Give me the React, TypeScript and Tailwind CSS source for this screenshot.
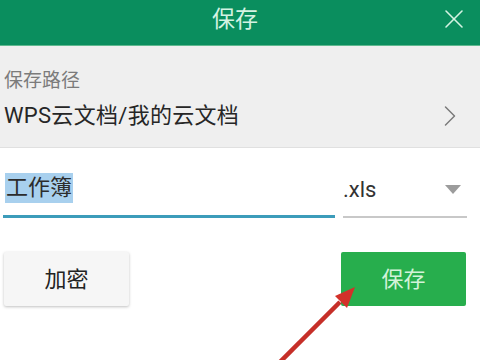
import { ChevronRight, X } from "lucide-react"

export default function App() {
    return (
        <div className="relative w-[480px] h-[360px] overflow-hidden bg-white font-['Roboto','Noto_Sans_CJK_SC',sans-serif]">
            {/* header */}
            <div className="h-[46px] bg-[#0a8e5e] grid grid-cols-[1fr_auto_1fr] items-center border-b border-[#5fb98f]">
                <div />
                <div className="text-[23px] leading-none text-[#d4f3e3] -mt-[6px] -ml-[10px]">保存</div>
                <div className="flex justify-end pr-[10px] -mt-[8px]">
                    <X className="w-[32px] h-[32px] text-[#d4f3e3]" strokeWidth={1.2} />
                </div>
            </div>

            {/* save path */}
            <div className="h-[102px] bg-[#efefef] border-b border-[#e0e0e0] pl-[4px] pr-[12px] pt-[25px]">
                <div className="text-[19px] leading-none text-[#7b7b7b]">保存路径</div>
                <div className="flex items-center justify-between mt-[8px]">
                    <span className="text-[22px] leading-none text-[#262626] tracking-[0.3px]">WPS云文档/我的云文档</span>
                    <ChevronRight className="w-[36px] h-[36px] text-[#7a7a7a]" strokeWidth={1} />
                </div>
            </div>

            {/* file name */}
            <div className="flex gap-[8px] pl-[3px] pr-[13px] pt-[25px]">
                <div className="w-[332px] border-b-[3px] border-[#3c9cba] pb-[12px]">
                    <span className="ml-[2px] inline-block bg-[#a8d0ee] text-[22px] leading-[30px] text-[#2c2c2c] px-[1px]">工作簿</span>
                </div>
                <div className="flex-1 flex items-center justify-between border-b-2 border-[#c8c8c8] pb-[10px]">
                    <span className="text-[22px] leading-none text-[#333]">.xls</span>
                    <svg width="16" height="9" viewBox="0 0 16 9" className="mr-[6px]">
                        <path d="M0 0 L16 0 L8 9 Z" fill="#9c9c9c" />
                    </svg>
                </div>
            </div>

            {/* buttons */}
            <div className="flex justify-between pl-[4px] pr-[14px] mt-[34px]">
                <button className="w-[125px] h-[54px] bg-[#f6f6f6] rounded-[2px] shadow-[0_1px_3px_rgba(0,0,0,0.25)] text-[22px] text-[#222]">
                    加密
                </button>
                <button className="w-[125px] h-[54px] bg-[#27ae4d] rounded-[2px] text-[22px] text-[#d2f3d9]">
                    保存
                </button>
            </div>

            {/* red arrow */}
            <svg className="absolute left-0 top-0" width="480" height="360" viewBox="0 0 480 360">
                <line x1="276" y1="366" x2="340" y2="302" stroke="#c62f28" strokeWidth="4.5" />
                <path d="M355 287 L335 296 L347 308 Z" fill="#d3312a" />
            </svg>
        </div>
    )
}
